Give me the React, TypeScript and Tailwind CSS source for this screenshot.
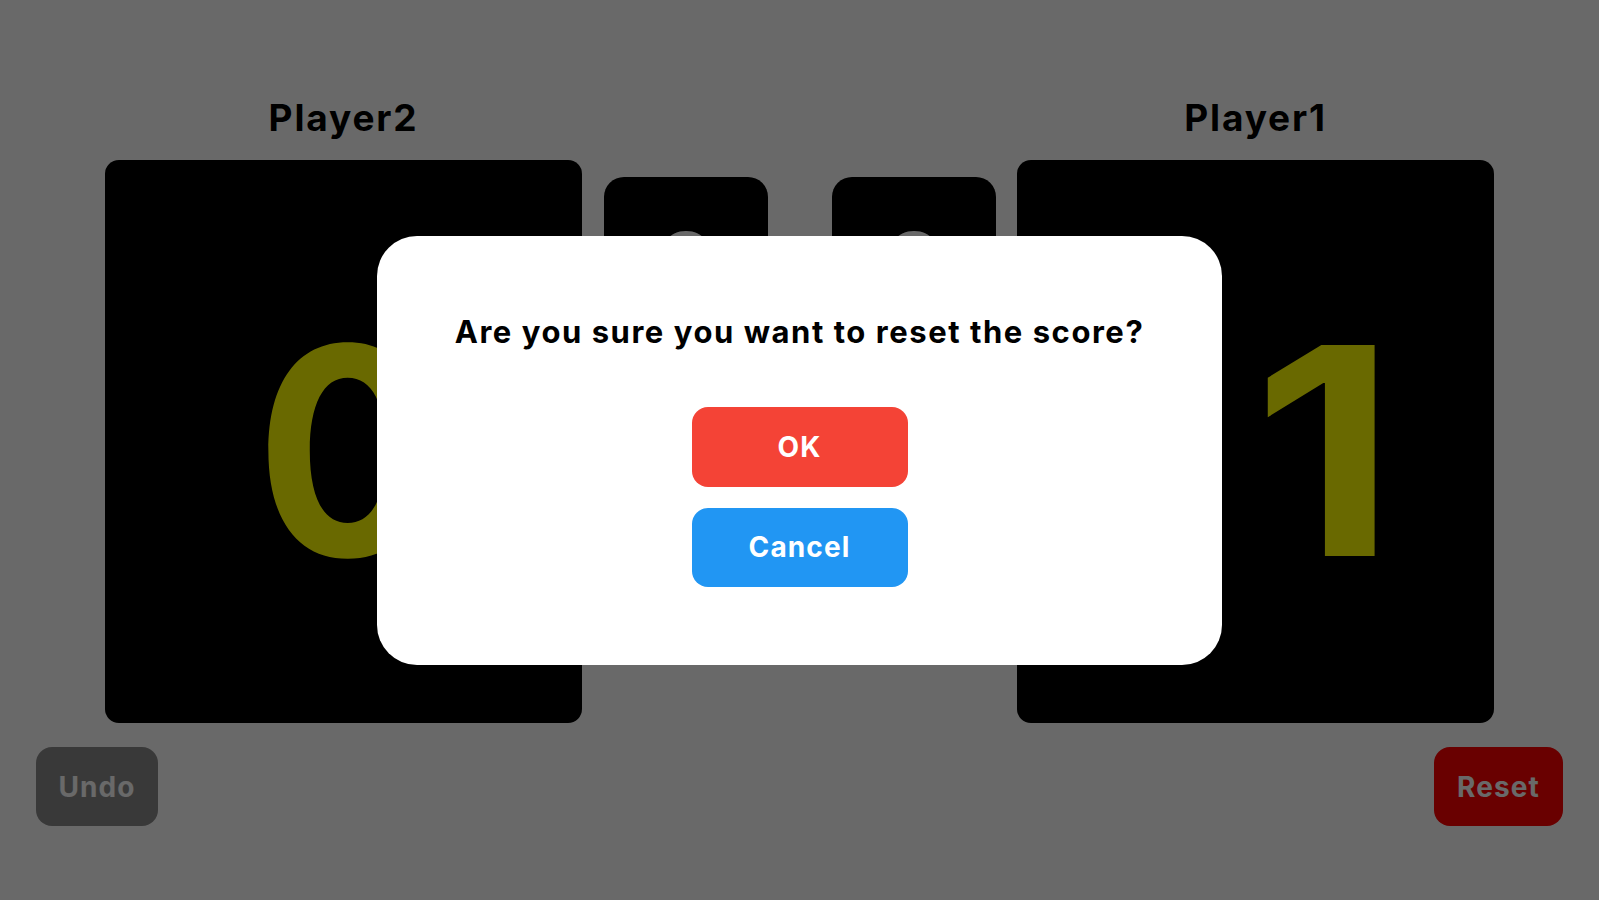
import React from 'react';

const font = { fontFamily: 'Inter, "Noto Sans", sans-serif' };

function ScoreCard({ name, score, shift }: { name: string; score: number; shift?: boolean }) {
  return (
    <div className="flex flex-col items-center">
      <div className="h-[40px] text-[37px] leading-[40px] font-bold tracking-[0.05em] text-black">{name}</div>
      <div className="mt-[22px] w-[477px] h-[563px] rounded-[14px] bg-black flex items-center justify-center">
        <span
          className={
            shift
              ? 'ml-[138px] pt-[18px] text-[290px] leading-none font-bold text-[#ffff00] scale-x-[1.15]'
              : 'ml-[8px] pt-[18px] text-[290px] leading-none font-bold text-[#ffff00] scale-x-[0.94]'
          }
        >
          {score}
        </span>
      </div>
    </div>
  );
}

function SetCard({ sets }: { sets: number }) {
  return (
    <div className="w-[164px] h-[165px] rounded-[20px] bg-black flex items-center justify-center">
      <span className="pt-[10px] text-[90px] leading-none font-bold text-white">{sets}</span>
    </div>
  );
}

export default function App() {
  return (
    <div className="relative w-full h-[900px] bg-white overflow-hidden" style={font}>
      <div className="flex flex-col h-full pt-[98px]">
        <div className="flex justify-center items-start">
          <ScoreCard name="Player2" score={0} />
          <div className="mt-[79px] ml-[22px] flex gap-[64px]">
            <SetCard sets={0} />
            <SetCard sets={0} />
          </div>
          <div className="ml-[21px]">
            <ScoreCard name="Player1" score={1} shift />
          </div>
        </div>
        <div className="mt-[24px] px-[36px] flex justify-between">
          <button className="w-[122px] h-[79px] rounded-[16px] bg-[#8c8c8c] text-white text-[28px] tracking-[0.04em] font-bold">
            Undo
          </button>
          <button className="w-[129px] h-[79px] rounded-[16px] bg-[#ff0000] text-white text-[28px] tracking-[0.04em] font-bold">
            Reset
          </button>
        </div>
      </div>

      <div className="absolute inset-0 bg-black/[0.59] flex items-center justify-center">
        <div className="w-[845px] rounded-[40px] bg-white py-[78px] flex flex-col items-center">
          <p className="text-[31px] leading-[36px] font-bold tracking-[0.05em] text-black">
            Are you sure you want to reset the score?
          </p>
          <button className="mt-[57px] w-[216px] h-[80px] rounded-[16px] bg-[#f44336] text-white text-[28px] tracking-[0.04em] font-bold">
            OK
          </button>
          <button className="mt-[21px] w-[216px] h-[79px] rounded-[16px] bg-[#2196f3] text-white text-[28px] tracking-[0.04em] font-bold">
            Cancel
          </button>
        </div>
      </div>
    </div>
  );
}
